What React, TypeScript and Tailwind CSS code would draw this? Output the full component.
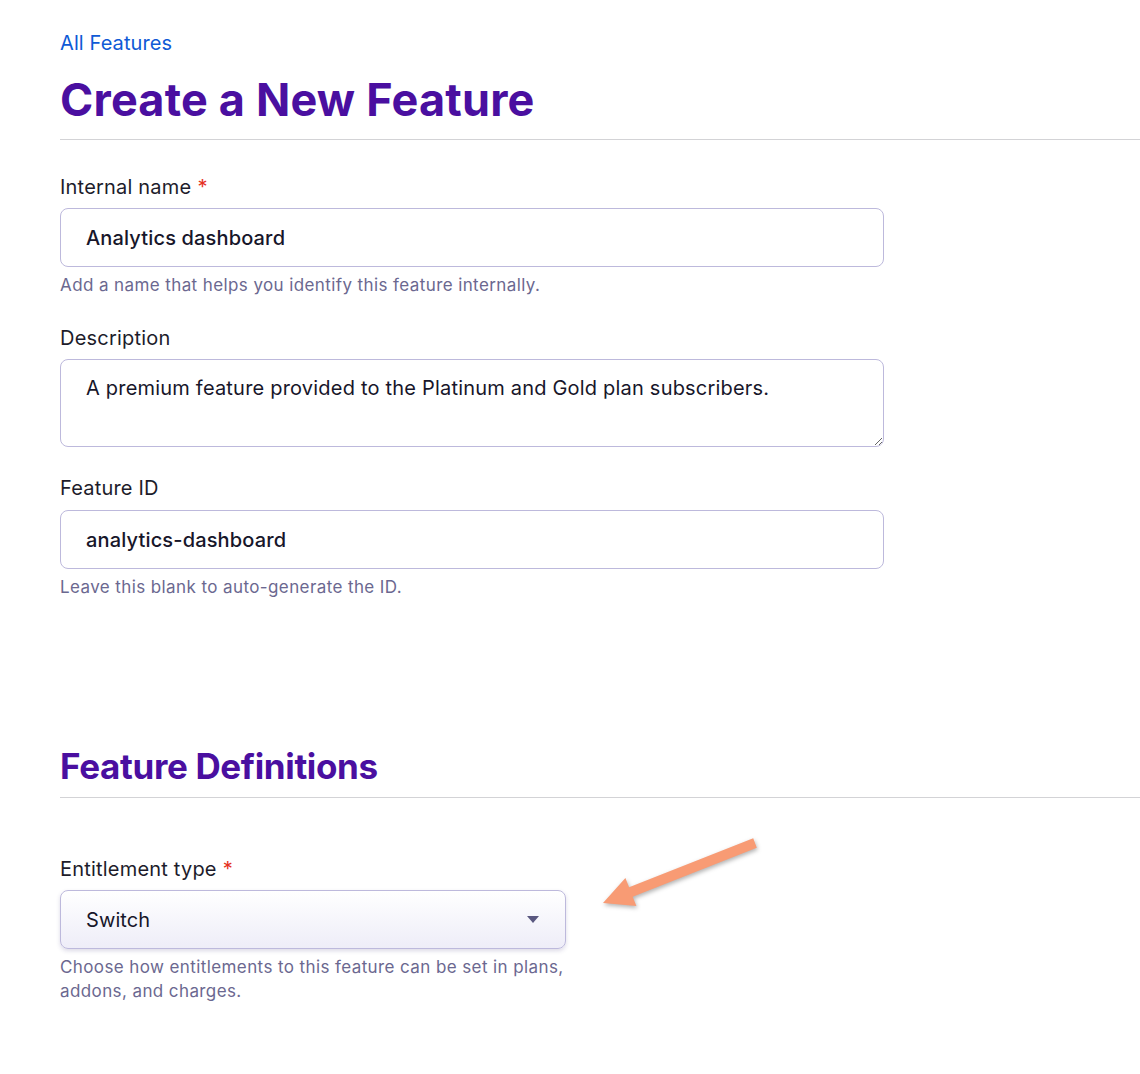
import React from "react";

const font = { fontFamily: "Inter, 'Noto Sans', sans-serif" };

function Label({ children, required }: { children: React.ReactNode; required?: boolean }) {
  return (
    <div className="text-[20px] leading-[24px] tracking-[0.2px] text-[#1d1c2b]">
      {children}
      {required && <span className="ml-[6px] text-[#e5311f]">*</span>}
    </div>
  );
}

function Help({ children }: { children: React.ReactNode }) {
  return (
    <div className="mt-[6px] whitespace-nowrap text-[17px] leading-[24px] tracking-[0.4px] text-[#6b6890]">
      {children}
    </div>
  );
}

const fieldClass =
  "block w-[824px] rounded-[8px] border border-[#bdb9dc] bg-white px-[25px] text-[20px] text-[#17162a] outline-none";

export default function App() {
  return (
    <div className="relative min-h-[1074px] bg-white pl-[60px] pt-[31px]" style={font}>
      <a className="block text-[20px] leading-[24px] tracking-[0.1px] text-[#0f5ad6]" href="#">
        All Features
      </a>
      <h1 className="mt-[16px] text-[45px] font-bold leading-[58px] tracking-[0.2px] text-[#4a0fa0]">
        Create a New Feature
      </h1>
      <div className="mt-[10px] border-t border-[#d3d3d6]" />

      <div className="mt-[35px]">
        <Label required>Internal name</Label>
        <input
          className={`${fieldClass} mt-[9px] h-[59px] font-medium tracking-[0.15px]`}
          defaultValue="Analytics dashboard"
        />
        <Help>Add a name that helps you identify this feature internally.</Help>
      </div>

      <div className="mt-[29px]">
        <Label>Description</Label>
        <textarea
          className={`${fieldClass} mt-[9px] h-[88px] pt-[16px] leading-[24px] tracking-[0.2px]`}
          defaultValue="A premium feature provided to the Platinum and Gold plan subscribers."
        />
      </div>

      <div className="mt-[29px]">
        <Label>Feature ID</Label>
        <input
          className={`${fieldClass} mt-[10px] h-[59px] font-medium tracking-[0.15px]`}
          defaultValue="analytics-dashboard"
        />
        <Help>Leave this blank to auto-generate the ID.</Help>
      </div>

      <h2 className="mt-[145px] text-[35px] font-bold leading-[44px] tracking-[-0.35px] text-[#4a0fa0]">
        Feature Definitions
      </h2>
      <div className="mt-[9px] border-t border-[#d3d3d6]" />

      <div className="mt-[59px]">
        <Label required>Entitlement type</Label>
        <div className="relative mt-[9px] flex h-[59px] w-[506px] items-center justify-between rounded-[8px] border border-[#bdb9dc] bg-gradient-to-b from-white to-[#eeedf8] px-[25px] shadow-[0_2px_4px_rgba(60,50,120,0.18)]">
          <span className="text-[20px] tracking-[0.1px] text-[#17162a]">Switch</span>
          <svg width="12" height="7" viewBox="0 0 12 7" className="mr-[1px]">
            <path d="M0 0H12L6 7Z" fill="#5a5880" />
          </svg>
        </div>
        <Help>
          Choose how entitlements to this feature can be set in plans,
          <br />
          addons, and charges.
        </Help>
      </div>

      {/* callout arrow pointing at the entitlement select */}
      <svg
        className="absolute left-[595px] top-[830px]"
        width="170"
        height="90"
        viewBox="0 0 170 90"
        style={{ filter: "drop-shadow(1px 2px 2px rgba(0,0,0,0.3))" }}
      >
        <polygon
          points="158.2,8.35 161.8,17.65 37.7,66.65 41.4,75.95 8,73 30.4,48.05 34.1,57.35"
          fill="#f89b74"
        />
      </svg>
    </div>
  );
}
